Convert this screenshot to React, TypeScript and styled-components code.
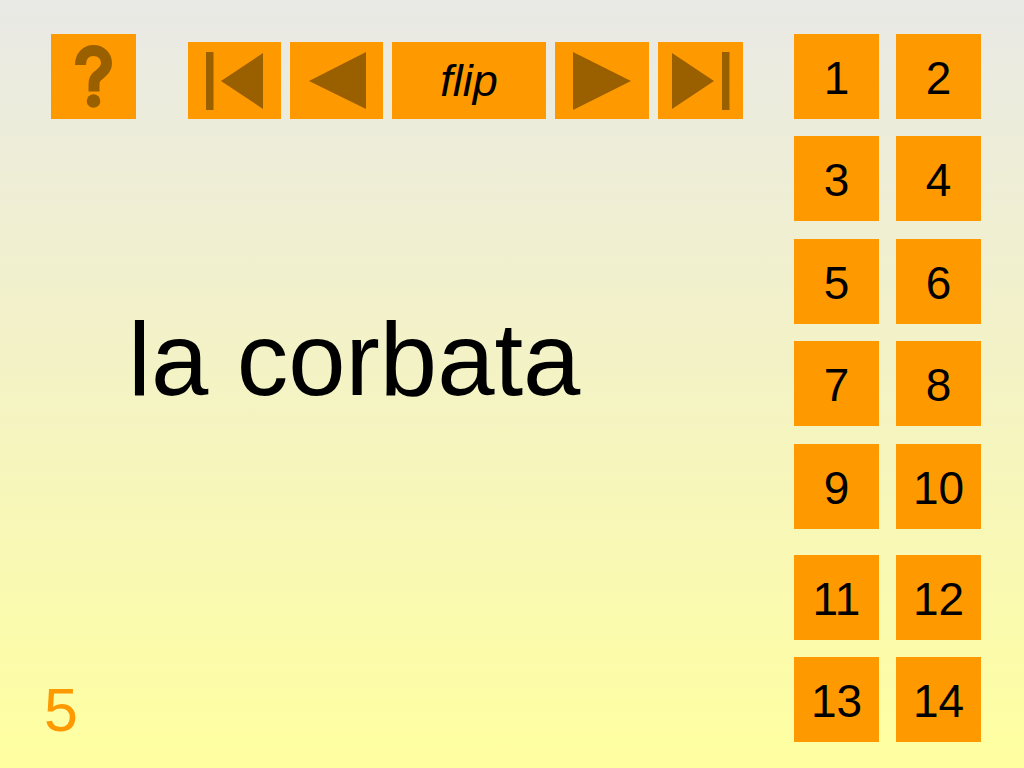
import React from "react";
import styled, { createGlobalStyle } from "styled-components";

const GlobalStyle = createGlobalStyle`
  html, body {
    margin: 0;
    padding: 0;
  }
  body {
    font-family: "Liberation Sans", Arial, sans-serif;
  }
`;

const ORANGE = "#ff9900";
const BROWN = "#9a6000";

const Page = styled.div`
  width: 1024px;
  height: 768px;
  display: flex;
  background: linear-gradient(to bottom, #e9e9e6 0%, #f4f3c4 50%, #ffffa0 100%);
  overflow: hidden;
`;

const LeftColumn = styled.div`
  flex: 1;
  display: flex;
  flex-direction: column;
  padding: 34px 0 0 44px;
`;

const Toolbar = styled.div`
  display: flex;
  align-items: flex-end;
  padding-left: 7px;
  height: 85px;
`;

const HelpButton = styled.button`
  width: 85px;
  height: 85px;
  margin-right: 52px;
  border: none;
  padding: 0;
  background: ${ORANGE};
  display: flex;
  align-items: center;
  justify-content: center;
  cursor: pointer;
`;

const NavGroup = styled.div`
  display: flex;
  gap: 9px;
`;

const NavButton = styled.button<{ $w: number }>`
  width: ${(p) => p.$w}px;
  height: 77px;
  border: none;
  padding: 0;
  background: ${ORANGE};
  display: flex;
  align-items: center;
  justify-content: center;
  cursor: pointer;
  font-family: "Liberation Sans", Arial, sans-serif;
`;

const FlipLabel = styled.span`
  font-style: italic;
  font-size: 45px;
  line-height: 1;
  color: #000;
`;

const Term = styled.div`
  margin: 189px 0 0 84px;
  font-size: 103px;
  line-height: 1;
  color: #000;
  white-space: nowrap;
`;

const PageNumber = styled.div`
  margin-top: auto;
  margin-bottom: 27px;
  font-size: 61px;
  line-height: 1;
  color: ${ORANGE};
`;

const RightColumn = styled.div`
  width: 187px;
  margin-right: 43px;
  padding-top: 34px;
  display: flex;
  flex-direction: column;
`;

const TileRow = styled.div<{ $gap: number }>`
  display: flex;
  gap: 17px;
  margin-top: ${(p) => p.$gap}px;
`;

const Tile = styled.button`
  width: 85px;
  height: 85px;
  border: none;
  padding: 2px 0 0 0;
  background: ${ORANGE};
  display: flex;
  align-items: center;
  justify-content: center;
  font-family: "Liberation Sans", Arial, sans-serif;
  font-size: 46px;
  line-height: 1;
  color: #000;
  cursor: pointer;
`;

const HelpIcon = () => (
  <svg width="85" height="85" viewBox="0 0 85 85">
    <path
      d="M29.5 31 C29.5 22 35 16.5 42.5 16.5 C50 16.5 55.5 22 55.5 29 C55.5 36 50 39 46.5 42 C43.5 44.5 43 46.5 43 50 L43 57.5"
      fill="none"
      stroke={BROWN}
      strokeWidth="11"
    />
    <circle cx="42.5" cy="67" r="6.8" fill={BROWN} />
  </svg>
);

const FirstIcon = () => (
  <svg width="93" height="77" viewBox="0 0 93 77">
    <rect x="18" y="10" width="7.5" height="58" fill={BROWN} />
    <polygon points="33,39 75,11 75,67" fill={BROWN} />
  </svg>
);

const PrevIcon = () => (
  <svg width="93" height="77" viewBox="0 0 93 77">
    <polygon points="19,39 76,10 76,67" fill={BROWN} />
  </svg>
);

const NextIcon = () => (
  <svg width="94" height="77" viewBox="0 0 94 77">
    <polygon points="18,10 18,68 76,39" fill={BROWN} />
  </svg>
);

const LastIcon = () => (
  <svg width="85" height="77" viewBox="0 0 85 77">
    <polygon points="14,11 14,67 56,39" fill={BROWN} />
    <rect x="64" y="10" width="7.5" height="58" fill={BROWN} />
  </svg>
);

const rows: { gap: number; tiles: string[] }[] = [
  { gap: 0, tiles: ["1", "2"] },
  { gap: 17, tiles: ["3", "4"] },
  { gap: 18, tiles: ["5", "6"] },
  { gap: 17, tiles: ["7", "8"] },
  { gap: 18, tiles: ["9", "10"] },
  { gap: 26, tiles: ["11", "12"] },
  { gap: 17, tiles: ["13", "14"] },
];

export default function App() {
  return (
    <>
      <GlobalStyle />
      <Page>
        <LeftColumn>
          <Toolbar>
            <HelpButton aria-label="help">
              <HelpIcon />
            </HelpButton>
            <NavGroup>
              <NavButton $w={93} aria-label="first">
                <FirstIcon />
              </NavButton>
              <NavButton $w={93} aria-label="previous">
                <PrevIcon />
              </NavButton>
              <NavButton $w={154}>
                <FlipLabel>flip</FlipLabel>
              </NavButton>
              <NavButton $w={94} aria-label="next">
                <NextIcon />
              </NavButton>
              <NavButton $w={85} aria-label="last">
                <LastIcon />
              </NavButton>
            </NavGroup>
          </Toolbar>
          <Term>la corbata</Term>
          <PageNumber>5</PageNumber>
        </LeftColumn>
        <RightColumn>
          {rows.map((r, i) => (
            <TileRow key={i} $gap={r.gap}>
              {r.tiles.map((t) => (
                <Tile key={t}>{t}</Tile>
              ))}
            </TileRow>
          ))}
        </RightColumn>
      </Page>
    </>
  );
}
